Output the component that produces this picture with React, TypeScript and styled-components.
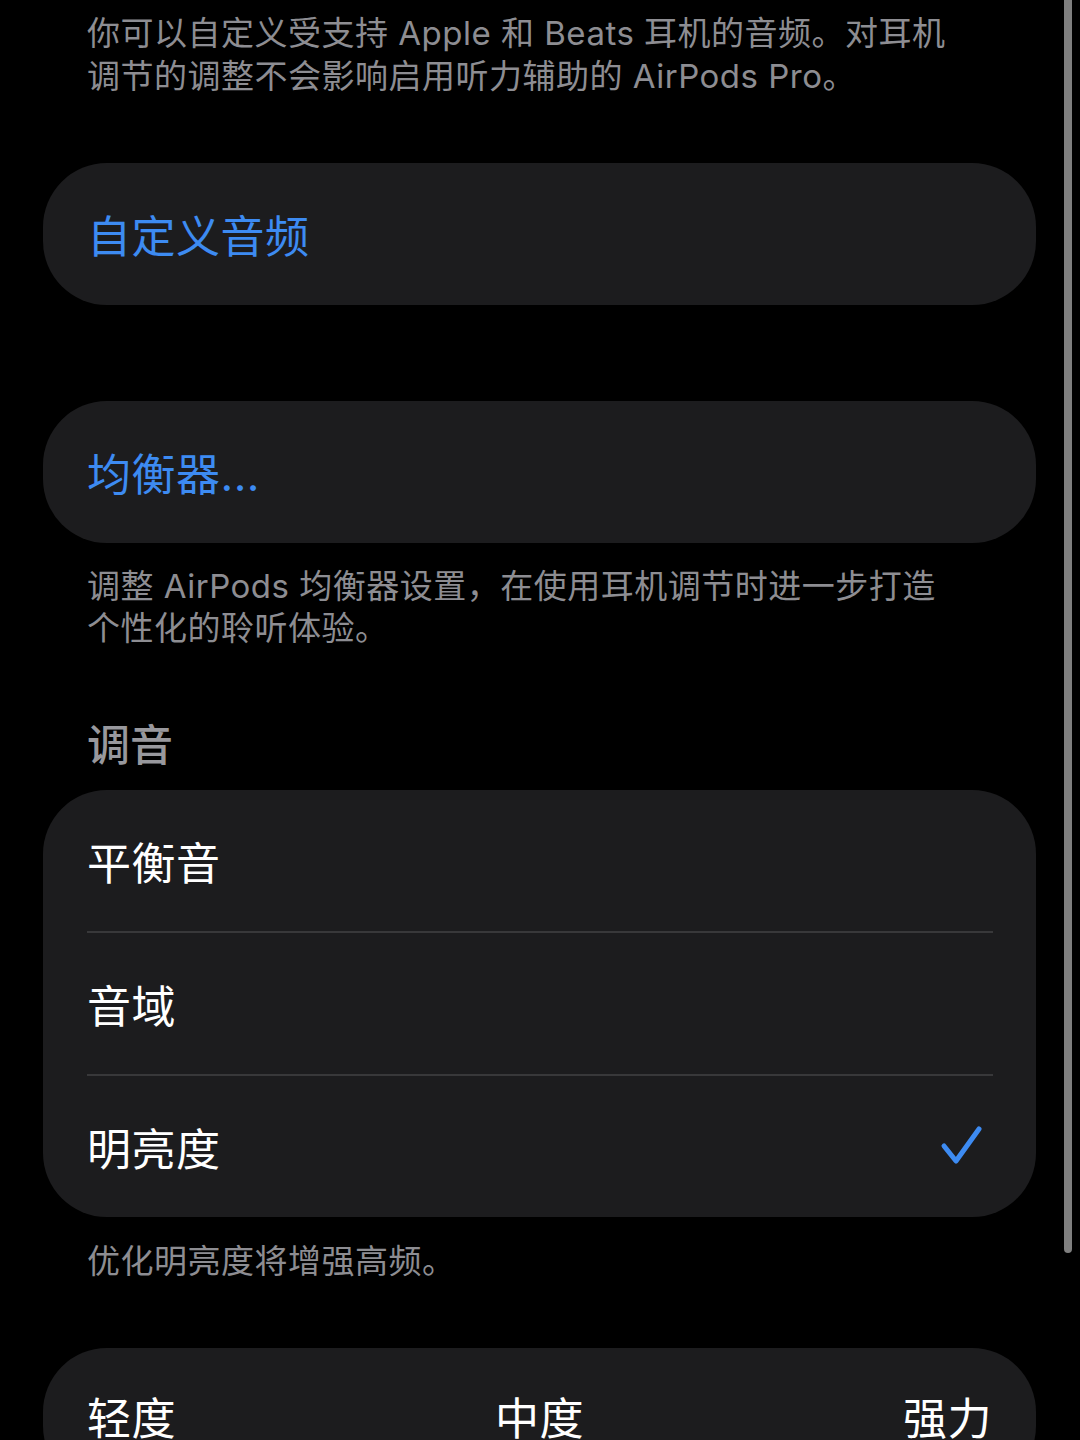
import React from "react";
import styled, { createGlobalStyle } from "styled-components";

const GlobalStyle = createGlobalStyle`
  html, body {
    margin: 0;
    padding: 0;
    background: #000000;
  }
  body {
    font-family: Inter, "Noto Sans CJK SC", sans-serif;
    -webkit-font-smoothing: antialiased;
  }
`;

const Page = styled.div`
  position: relative;
  width: 1080px;
  height: 1440px;
  overflow: hidden;
  background: #000000;
  padding: 12px 44px 0 43px;
  box-sizing: border-box;
  display: flex;
  flex-direction: column;
`;

const ScrollBar = styled.div`
  position: absolute;
  top: 0;
  right: 8px;
  width: 8px;
  height: 1253px;
  background: #7f7f7f;
  border-radius: 0 0 4px 4px;
`;

const Note = styled.p<{ $top?: number; $lh?: number }>`
  margin: ${({ $top }) => $top ?? 0}px 0 0;
  padding: 0 44px;
  font-size: 33px;
  line-height: ${({ $lh }) => $lh ?? 42}px;
  color: #8d8d92;
  letter-spacing: 0.5px;
  white-space: nowrap;
`;

const Card = styled.div<{ $top: number }>`
  margin-top: ${({ $top }) => $top}px;
  background: #1c1c1e;
  border-radius: 64px;
  display: flex;
  flex-direction: column;
  flex-shrink: 0;
`;

const Row = styled.div<{ $h?: number }>`
  height: ${({ $h }) => $h ?? 142}px;
  padding: 0 44px;
  display: flex;
  align-items: center;
  justify-content: space-between;
  box-sizing: border-box;
`;

const ActionLabel = styled.span`
  font-size: 44px;
  color: #3d8bf2;
  letter-spacing: 0.5px;
`;

const OptionLabel = styled.span`
  font-size: 44px;
  color: #ffffff;
  letter-spacing: 0.5px;
`;

const Separator = styled.div`
  height: 2px;
  margin-left: 44px;
  margin-right: 43px;
  background: #38383a;
`;

const SectionHeader = styled.h2`
  margin: 70px 0 0;
  padding: 0 44px;
  font-size: 43px;
  line-height: 52px;
  font-weight: 500;
  color: #98989d;
`;

const Check = styled.svg`
  width: 44px;
  height: 44px;
  margin-right: 9px;
  margin-top: -2px;
`;

const IntensityRow = styled(Row)`
  align-items: flex-start;
  padding-top: 36px;
`;

const CheckMark = () => (
  <Check viewBox="0 0 44 44" fill="none">
    <path
      d="M5 22 L17 37 L40 5"
      stroke="#3d8bf2"
      strokeWidth="5"
      strokeLinecap="round"
      strokeLinejoin="round"
    />
  </Check>
);

const tones = [
  { label: "平衡音", selected: false },
  { label: "音域", selected: false },
  { label: "明亮度", selected: true },
];

export default function App() {
  return (
    <>
      <GlobalStyle />
      <Page>
        <Note $lh={43}>
          你可以自定义受支持 Apple 和 Beats 耳机的音频。对耳机
          <br />
          调节的调整不会影响启用听力辅助的 AirPods Pro。
        </Note>

        <Card $top={65}>
          <Row>
            <ActionLabel>自定义音频</ActionLabel>
          </Row>
        </Card>

        <Card $top={96}>
          <Row>
            <ActionLabel>均衡器...</ActionLabel>
          </Row>
        </Card>

        <Note $top={22}>
          调整 AirPods 均衡器设置，在使用耳机调节时进一步打造
          <br />
          个性化的聆听体验。
        </Note>

        <SectionHeader>调音</SectionHeader>

        <Card $top={19}>
          {tones.map((tone, i) => (
            <React.Fragment key={tone.label}>
              {i > 0 && <Separator />}
              <Row $h={141}>
                <OptionLabel>{tone.label}</OptionLabel>
                {tone.selected && <CheckMark />}
              </Row>
            </React.Fragment>
          ))}
        </Card>

        <Note $top={23}>优化明亮度将增强高频。</Note>

        <Card $top={66}>
          <IntensityRow>
            <OptionLabel>轻度</OptionLabel>
            <OptionLabel>中度</OptionLabel>
            <OptionLabel>强力</OptionLabel>
          </IntensityRow>
        </Card>

        <ScrollBar />
      </Page>
    </>
  );
}
